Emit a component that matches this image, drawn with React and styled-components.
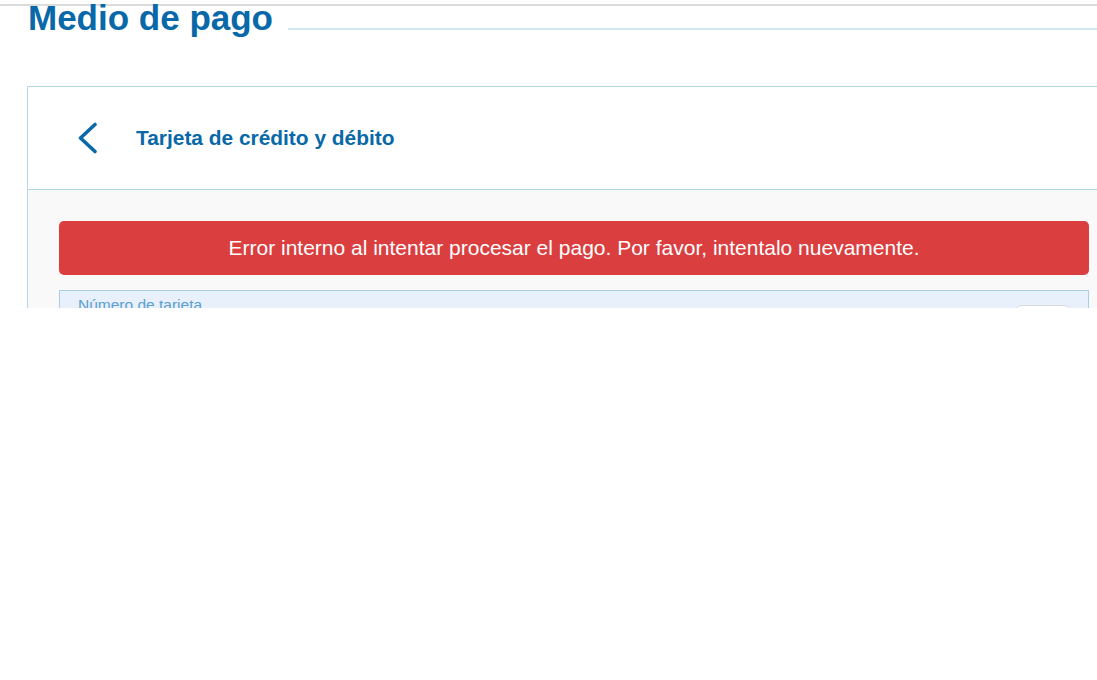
import React from 'react';
import styled, { createGlobalStyle } from 'styled-components';

const GlobalStyle = createGlobalStyle`
	html, body {
		margin: 0;
		padding: 0;
		background: #fff;
		overflow: hidden;
		font-family: "Liberation Sans", Arial, sans-serif;
	}
`;

const Viewport = styled.div`
		height: 308px;
		overflow: hidden;
		width: 1120px;
	`,
	TopRule = styled.div`
		height: 2px;
		margin-top: 4px;
		background: #dcdcdc;
	`,
	Page = styled.div`
		padding: 0 0 0 27px;
	`,
	TitleRow = styled.div`
		display: flex;
		align-items: flex-start;
		margin: -6px 0 51px;
	`,
	Title = styled.h1`
		margin: 0 15px 0 1px;
		font-size: 35px;
		line-height: 35px;
		font-weight: bold;
		color: #0868a8;
		white-space: nowrap;
	`,
	TitleRule = styled.div`
		flex: 1;
		height: 2px;
		margin-top: 28px;
		background: #d7e7f1;
	`,
	Card = styled.div`
		border: 1px solid #b3d6e8;
		border-right: none;
		background: #f9f9f9;
	`,
	CardHeader = styled.div`
		display: flex;
		align-items: center;
		height: 102px;
		background: #fff;
		border-bottom: 1px solid #b3d6e8;
		padding-left: 49px;
	`,
	BackButton = styled.button`
		display: flex;
		align-items: center;
		justify-content: center;
		border: none;
		background: none;
		padding: 0;
		margin: 0 37px 0 0;
		width: 22px;
		height: 32px;
		cursor: pointer;
	`,
	HeaderTitle = styled.h2`
		margin: 0;
		font-size: 20.9px;
		font-weight: bold;
		color: #0868a8;
	`,
	CardBody = styled.div`
		padding: 31px 31px 0 31px;
		display: flex;
		flex-direction: column;
		gap: 15px;
	`,
	ErrorBox = styled.div`
		background: #db3e3f;
		color: #fff;
		border-radius: 5px;
		height: 54px;
		display: flex;
		align-items: center;
		justify-content: center;
		font-size: 21px;
	`,
	Field = styled.div`
		position: relative;
		background: #e8f0fb;
		border: 1px solid #a9cfe6;
		height: 60px;
		padding: 5px 18px;
	`,
	FieldLabel = styled.label`
		display: block;
		font-size: 15.5px;
		color: #5b9fd3;
	`,
	CardBadge = styled.div`
		position: absolute;
		right: 16px;
		top: 14px;
		width: 56px;
		height: 34px;
		background: #fff;
		border: 1px solid #dadada;
		border-radius: 8px;
	`;

const ChevronLeft = () => (
	<svg width='22' height='32' viewBox='0 0 22 32'>
		<polyline
			points='18,2.5 3.5,16 18,29.5'
			fill='none'
			stroke='#0868a8'
			strokeWidth='3.6'
			strokeLinecap='round'
			strokeLinejoin='round'
		/>
	</svg>
);

const App = () => {
	return (
		<>
			<GlobalStyle />
			<Viewport>
				<TopRule />
				<Page>
					{/* Section title */}
					<TitleRow>
						<Title>Medio de pago</Title>
						<TitleRule />
					</TitleRow>
					{/* Payment card */}
					<Card>
						<CardHeader>
							<BackButton aria-label='Volver'>
								<ChevronLeft />
							</BackButton>
							<HeaderTitle>Tarjeta de crédito y débito</HeaderTitle>
						</CardHeader>
						<CardBody>
							<ErrorBox>
								Error interno al intentar procesar el pago. Por favor, intentalo nuevamente.
							</ErrorBox>
							<Field>
								<FieldLabel>Número de tarjeta</FieldLabel>
								<CardBadge />
							</Field>
						</CardBody>
					</Card>
				</Page>
			</Viewport>
		</>
	);
};

export default App;
